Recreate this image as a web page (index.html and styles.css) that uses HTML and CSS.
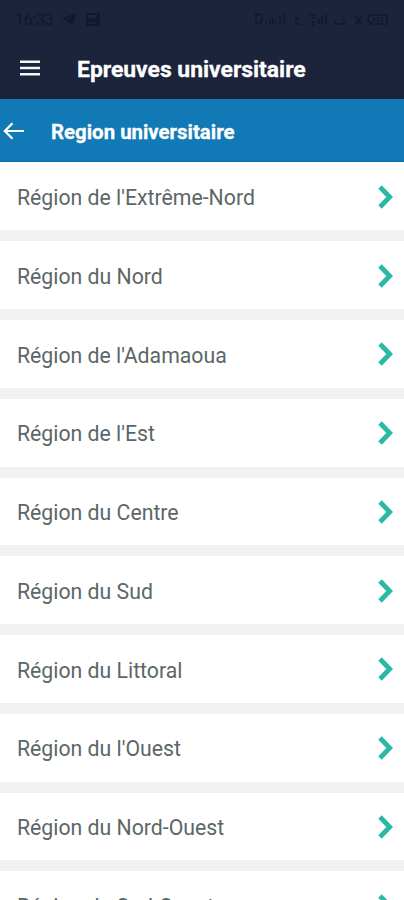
FILE: index.html
```
<!DOCTYPE html>
<html lang="fr">
<head>
<meta charset="utf-8">
<title>Epreuves universitaire</title>
<link rel="stylesheet" href="styles.css">
</head>
<body>
<div class="status">
  <span class="time">16:33</span>
  <svg class="plane" width="16" height="13" viewBox="0 0 16 13"><path d="M0 6 15 0 12 12 8 9 7 12 6 8 11 4 4 7Z"/></svg>
  <svg class="photo" width="16" height="13" viewBox="0 0 16 13"><path fill-rule="evenodd" d="M1 0H15V13H1ZM3 2V7L6 4 9 7 12 3V2ZM3 11H12L9 8 7 10 5 8Z"/></svg>
  <svg class="signals" width="138" height="15" viewBox="0 0 138 15">
    <g fill="none" stroke="currentColor" stroke-width="1.6">
      <path d="M2 1.5V11.5M1 2H5Q8 2 8 6.500T5 11.500H2M11 11h2M16 12V8M19 12V6M22 12V8M26 12V4M30 12V2M42 2V12H47M42 7H46M56 3H63M57 6H62M59 9V14M65 12V7M68 12V4M72 12V2M81 8V12H90V8M101 4L107 12M108 3L102 12"/>
      <path d="M119 3Q114 3 114 7T119 12H133V3H119M120 5V10M124 5V10M128 5V10"/>
    </g>
  </svg>
</div>
<header class="appbar">
  <svg class="menu" width="22" height="16" viewBox="0 0 22 16"><path d="M1 1.700H21M1 8H21M1 14.300H21"/></svg>
  <h1>Epreuves universitaire</h1>
</header>
<div class="subbar">
  <svg class="back" width="22" height="18" viewBox="0 0 22 18"><path d="M21 9H2M9.500 1.200 1.800 9 9.500 16.800"/></svg>
  <h2>Region universitaire</h2>
</div>
<ul class="list">
  <li><span>Région de l'Extrême-Nord</span><svg class="chev" width="16" height="24" viewBox="0 0 16 24"><path d="M2 2 11.700 12 2 22"/></svg></li>
  <li><span>Région du Nord</span><svg class="chev" width="16" height="24" viewBox="0 0 16 24"><path d="M2 2 11.700 12 2 22"/></svg></li>
  <li><span>Région de l'Adamaoua</span><svg class="chev" width="16" height="24" viewBox="0 0 16 24"><path d="M2 2 11.700 12 2 22"/></svg></li>
  <li><span>Région de l'Est</span><svg class="chev" width="16" height="24" viewBox="0 0 16 24"><path d="M2 2 11.700 12 2 22"/></svg></li>
  <li><span>Région du Centre</span><svg class="chev" width="16" height="24" viewBox="0 0 16 24"><path d="M2 2 11.700 12 2 22"/></svg></li>
  <li><span>Région du Sud</span><svg class="chev" width="16" height="24" viewBox="0 0 16 24"><path d="M2 2 11.700 12 2 22"/></svg></li>
  <li><span>Région du Littoral</span><svg class="chev" width="16" height="24" viewBox="0 0 16 24"><path d="M2 2 11.700 12 2 22"/></svg></li>
  <li><span>Région du l'Ouest</span><svg class="chev" width="16" height="24" viewBox="0 0 16 24"><path d="M2 2 11.700 12 2 22"/></svg></li>
  <li><span>Région du Nord-Ouest</span><svg class="chev" width="16" height="24" viewBox="0 0 16 24"><path d="M2 2 11.700 12 2 22"/></svg></li>
  <li><span>Région du Sud-Ouest</span><svg class="chev" width="16" height="24" viewBox="0 0 16 24"><path d="M2 2 11.700 12 2 22"/></svg></li>
</ul>
</body>
</html>
```
FILE: styles.css
```
* { box-sizing: border-box; }
body {
  margin: 0;
  height: 900px;
  overflow: hidden;
  background: #eff1f3;
  font-family: Roboto, "Liberation Sans", sans-serif;
}
svg { display: block; flex: none; }
h1, h2 {
  margin: 0;
  font-weight: 700;
  color: #fff;
  white-space: nowrap;
  -webkit-text-stroke: 0.3px #fff;
}
.status {
  height: 38px;
  padding: 0 12px 0 15px;
  display: flex;
  align-items: center;
  background: #1c243b;
  color: #11182b;
}
.time { width: 46px; font-size: 16px; letter-spacing: -0.3px; }
.plane, .photo { fill: currentColor; }
.photo { margin-left: 8px; }
.signals { margin-left: auto; }
.appbar {
  height: 61px;
  padding-left: 19px;
  display: flex;
  align-items: center;
  background: #1c243b;
}
.menu { fill: none; stroke: #f4f6fa; stroke-width: 2.4; margin-top: -1px; }
.appbar h1 { margin-left: 36px; padding-top: 2px; font-size: 22.9px; }
.subbar {
  height: 63px;
  padding: 2px 0 0 3px;
  display: flex;
  align-items: center;
  background: #1179b5;
  border-bottom: 1px solid #0c6ba3;
}
.back { fill: none; stroke: #fff; stroke-width: 2.2; margin-top: -1px; }
.subbar h2 { margin-left: 26px; padding-top: 2px; font-size: 20.4px; }
.list {
  margin: 0;
  padding: 0.5px 0 0;
  list-style: none;
  display: flex;
  flex-direction: column;
  gap: 11px;
  background: linear-gradient(#fff 2px, #eff1f3 2px);
}
.list li {
  height: 67.75px;
  padding: 1px 10px 0 17px;
  display: flex;
  align-items: center;
  justify-content: space-between;
  background: #fff;
  color: #5b6766;
  font-size: 21.25px;
}
.list span { padding-top: 1.5px; }
.chev { fill: none; stroke: #2bb9a5; stroke-width: 4.8; }
```
